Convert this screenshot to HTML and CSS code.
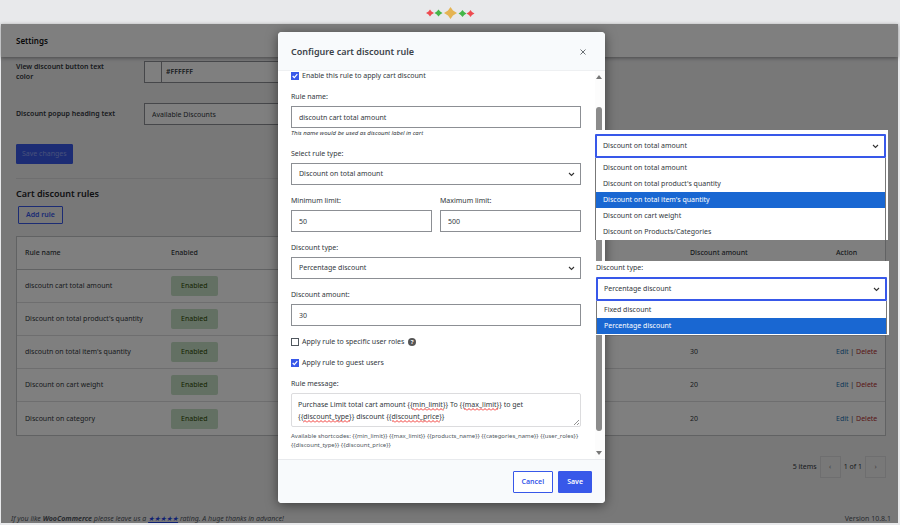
FILE: index.html
```html
<!DOCTYPE html>
<html lang="en">
<head>
  <meta charset="UTF-8">
  <title>Settings</title>
  <link rel="stylesheet" href="styles.css">
</head>
<body>

  <div class="ornament">
    <svg width="50" height="12" viewBox="0 0 50 12">
      <path fill="#ee4b50" d="M5 2.500l1.500 2L9 6 6.500 7.500 5 9.500 3.500 7.500 1 6l2.500-1.500z"/>
      <path fill="#45b649" d="M13.500 2.500l1.700 2L17.500 6l-2.300 1.500-1.700 2-1.700-2L9.500 6l2.300-1.500z"/>
      <path fill="#e5b453" d="M25.500 0l2.500 3.500 4 2.500-4 2.500-2.500 3.500L23 8.500 19 6l4-2.500z"/>
      <path fill="#45b649" d="M37.500 3l1.700 2 2.300 1.500L39.200 8l-1.700 2-1.700-2-2.300-1.500L35.800 5z"/>
      <path fill="#ee4b50" d="M45.500 3L47 5l2.500 1.500L47 8l-1.500 2L44 8l-2.500-1.500L44 5z"/>
    </svg>
  </div>

  <div class="app">
    <header class="topbar"><h1>Settings</h1></header>

    <main class="content">
      <form class="settings">
        <div class="setting">
          <label for="color">View discount button text color</label>
          <div class="color-field">
            <span class="swatch"></span>
            <input type="text" id="color" value="#FFFFFF">
          </div>
        </div>
        <div class="setting">
          <label for="heading">Discount popup heading text</label>
          <input type="text" id="heading" class="field" value="Available Discounts">
        </div>
        <button type="button" class="btn primary save-changes">Save changes</button>
      </form>

      <section class="rules">
        <h2>Cart discount rules</h2>
        <button type="button" class="btn add-rule">Add rule</button>

        <table>
          <thead>
            <tr><th class="name">Rule name</th><th>Enabled</th><th class="amount">Discount amount</th><th class="action">Action</th></tr>
          </thead>
          <tbody>
            <tr><td>discoutn cart total amount</td><td><span class="pill">Enabled</span></td><td></td><td></td></tr>
            <tr><td>Discount on total product's quantity</td><td><span class="pill">Enabled</span></td><td></td><td></td></tr>
            <tr><td>discoutn on total item's quantity</td><td><span class="pill">Enabled</span></td><td>30</td><td class="action"><a href="#">Edit</a> | <a href="#" class="delete">Delete</a></td></tr>
            <tr><td>Discount on cart weight</td><td><span class="pill">Enabled</span></td><td>20</td><td class="action"><a href="#">Edit</a> | <a href="#" class="delete">Delete</a></td></tr>
            <tr><td>Discount on category</td><td><span class="pill">Enabled</span></td><td>20</td><td class="action"><a href="#">Edit</a> | <a href="#" class="delete">Delete</a></td></tr>
          </tbody>
        </table>

        <div class="pagination">
          <span>5 items</span>
          <button type="button" aria-label="Previous page">‹</button>
          <span>1 of 1</span>
          <button type="button" aria-label="Next page">›</button>
        </div>
      </section>
    </main>

    <footer class="page-footer">
      <span class="thanks">If you like <b>WooCommerce</b> please leave us a <a href="#">★★★★★</a> rating. A huge thanks in advance!</span>
      <span>Version 10.8.1</span>
    </footer>

    <div class="overlay">
      <div class="modal" role="dialog" aria-labelledby="modal-title">
        <div class="modal-header">
          <h2 id="modal-title">Configure cart discount rule</h2>
          <button type="button" class="close" aria-label="Close">
            <svg width="6" height="6" viewBox="0 0 6 6"><path d="M.5.500l5 5M5.500.500l-5 5" stroke="#6b7075"/></svg>
          </button>
        </div>

        <div class="modal-body">
          <form class="rule-form">
            <label class="check"><input type="checkbox" checked> Enable this rule to apply cart discount</label>

            <div class="group">
              <label for="rule-name">Rule name:</label>
              <input type="text" id="rule-name" class="field" value="discoutn cart total amount">
              <p class="hint">This name would be used as discount label in cart</p>
            </div>

            <div class="group">
              <label for="rule-type">Select rule type:</label>
              <select id="rule-type" class="field"><option>Discount on total amount</option></select>
            </div>

            <div class="pair">
              <div class="group">
                <label for="min">Minimum limit:</label>
                <input type="text" id="min" class="field" value="50">
              </div>
              <div class="group">
                <label for="max">Maximum limit:</label>
                <input type="text" id="max" class="field" value="500">
              </div>
            </div>

            <div class="group">
              <label for="discount-type">Discount type:</label>
              <select id="discount-type" class="field"><option>Percentage discount</option></select>
            </div>

            <div class="group">
              <label for="amount">Discount amount:</label>
              <input type="text" id="amount" class="field" value="30">
            </div>

            <div class="check-row">
              <label class="check"><input type="checkbox"> Apply rule to specific user roles</label>
              <span class="help">?</span>
            </div>
            <label class="check"><input type="checkbox" checked> Apply rule to guest users</label>

            <div class="group">
              <label for="message">Rule message:</label>
              <div class="message">
                <textarea id="message" spellcheck="false">Purchase Limit total cart amount {{min_limit}} To {{max_limit}} to get {{discount_type}} discount {{discount_price}}</textarea>
                <!-- misspelling marks and resize grip -->
                <svg class="marks" width="290" height="34">
                  <defs>
                    <pattern id="wave" width="4" height="3" patternUnits="userSpaceOnUse">
                      <path d="M0 2.500L2 .500l2 2" fill="none" stroke="#f0332f"/>
                    </pattern>
                  </defs>
                  <rect x="121" y="15" width="32" height="3" fill="url(#wave)"/>
                  <rect x="173" y="15" width="34" height="3" fill="url(#wave)"/>
                  <rect x="12" y="27" width="47" height="3" fill="url(#wave)"/>
                  <rect x="101" y="27" width="48" height="3" fill="url(#wave)"/>
                  <path d="M283 32l5-5M286 32l2-2" stroke="#777" stroke-width=".8"/>
                </svg>
              </div>
              <p class="shortcodes">Available shortcodes: {{min_limit}} {{max_limit}} {{products_name}} {{categories_name}} {{user_roles}} {{discount_type}} {{discount_price}}</p>
            </div>
          </form>

          <div class="scrollbar">
            <span class="arrow up"></span>
            <span class="thumb"></span>
            <span class="arrow down"></span>
          </div>
        </div>

        <div class="modal-footer">
          <button type="button" class="btn">Cancel</button>
          <button type="button" class="btn primary">Save</button>
        </div>
      </div>
    </div>

    <div class="popup rule-popup">
      <select class="field open" aria-label="Rule type"><option>Discount on total amount</option></select>
      <ul class="options">
        <li>Discount on total amount</li>
        <li>Discount on total product's quantity</li>
        <li class="active">Discount on total item's quantity</li>
        <li>Discount on cart weight</li>
        <li>Discount on Products/Categories</li>
      </ul>
    </div>

    <div class="popup type-popup">
      <label for="type-open">Discount type:</label>
      <select id="type-open" class="field open"><option>Percentage discount</option></select>
      <ul class="options">
        <li>Fixed discount</li>
        <li class="active">Percentage discount</li>
      </ul>
    </div>
  </div>

</body>
</html>
```
FILE: styles.css
```css
* {
  box-sizing: border-box;
}
body {
  margin: 0;
  min-height: 100vh;
  padding: 0 2px 2px 1px;
  display: flex;
  flex-direction: column;
  background: #e8e9eb;
  color: #32373c;
  font-family: "Noto Sans", "Open Sans", sans-serif;
  font-size: 7px;
  line-height: 10px;
}
h1, h2, p, ul {
  margin: 0;
  padding: 0;
}
input, select, textarea, button {
  font: inherit;
  color: inherit;
}
.ornament {
  height: 24px;
  padding-top: 7px;
  display: flex;
  justify-content: center;
}
.app {
  position: relative;
  flex: 1;
  display: flex;
  flex-direction: column;
  background: #f0f0f1;
}

/* settings page */
.topbar {
  height: 33px;
  padding: 0 15px;
  display: flex;
  align-items: center;
  background: #fff;
  box-shadow: 0 1px 4px rgba(0, 0, 0, 0.4);
}
.topbar h1 {
  font-size: 8px;
  font-weight: 600;
  color: #111;
}
.content {
  flex: 1;
  padding: 4px 12px 0 15px;
}
.setting {
  display: grid;
  grid-template-columns: 104px 400px;
  column-gap: 24px;
  align-items: center;
  margin-bottom: 20px;
  font-weight: 600;
}
.field {
  width: 100%;
  height: 22px;
  padding: 0 7px;
  border: 1px solid #8c8f94;
  border-radius: 0;
  background: #fff;
  font-weight: 400;
}
.color-field {
  display: flex;
  height: 22px;
  border: 1px solid #8c8f94;
  background: #fff;
}
.swatch {
  width: 17px;
  border-right: 1px solid #8c8f94;
}
.color-field input {
  border: 0;
  padding: 0 4px;
  background: none;
}
.btn {
  height: 22px;
  padding: 0 8px;
  border: 1px solid #3858e9;
  border-radius: 1px;
  background: #fff;
  color: #3858e9;
  font-size: 7px;
  font-weight: 600;
}
.btn.primary {
  background: #3858e9;
  color: #fff;
}
.btn.save-changes {
  display: block;
  height: 20px;
  padding: 0 5px;
  margin-top: -1px;
  color: #8fa2f5;
  font-weight: 400;
}
.settings {
  padding-bottom: 14px;
  border-bottom: 1px solid #dcdcde;
}
.rules h2 {
  padding: 9px 0 6px;
  font-size: 9px;
  line-height: 12px;
  font-weight: 600;
  color: #1d2327;
}
.add-rule {
  display: block;
  height: 18px;
  padding: 0 7px;
  margin: 0 0 12px 2px;
  background: none;
}
table {
  width: 100%;
  border: 1px solid #c3c4c7;
  border-collapse: separate;
  border-spacing: 0;
  background: #fff;
  table-layout: fixed;
}
th, td {
  height: 33px;
  padding: 0 8px;
  text-align: left;
  border-bottom: 1px solid #dcdcde;
}
th {
  font-weight: 500;
  border-bottom-color: #c3c4c7;
}
tr:last-child td {
  border-bottom: 0;
}
.name, .amount {
  width: 146px;
}
.action {
  width: 57px;
  padding-right: 0;
  white-space: nowrap;
}
.pill {
  display: inline-block;
  padding: 5px 10px;
  border-radius: 2px;
  background: #c6e1c6;
  color: #2c4700;
}
td a {
  color: #2271b1;
  text-decoration: none;
}
td .delete {
  color: #b32d2e;
}
.pagination {
  margin-top: 20px;
  display: flex;
  align-items: center;
  justify-content: flex-end;
  gap: 3px;
}
.pagination button {
  width: 21px;
  height: 22px;
  padding: 0;
  border: 1px solid #dcdcde;
  background: none;
  color: #888;
}
.page-footer {
  display: flex;
  justify-content: space-between;
  padding: 0 7px 0 10px;
  line-height: 8px;
  color: #50575e;
}
.thanks {
  font-style: italic;
}
.thanks a {
  color: #2145e6;
}

/* modal */
.overlay {
  position: absolute;
  inset: 0;
  padding: 8px 16px 0 0;
  display: flex;
  justify-content: center;
  align-items: flex-start;
  background: rgba(0, 0, 0, 0.5);
}
.modal {
  width: 327px;
  border-radius: 4px;
  background: #fff;
  box-shadow: 0 2px 12px rgba(0, 0, 0, 0.5);
  overflow: hidden;
}
.modal-header {
  height: 39px;
  padding: 1px 16px 0 13px;
  display: flex;
  align-items: center;
  justify-content: space-between;
  background: #f8fafc;
  border-bottom: 1px solid #eef0f2;
}
.modal-header h2 {
  font-size: 9px;
  font-weight: 600;
  color: #3c434a;
}
.close {
  display: flex;
  padding: 3px;
  border: 0;
  background: none;
}
.modal-body {
  height: 388px;
  display: flex;
  overflow: hidden;
}
.rule-form {
  flex: 1;
  padding: 0 14px 0 13px;
  display: flex;
  flex-direction: column;
  gap: 11px;
}
.group label {
  display: block;
  margin-bottom: 4px;
}
.pair {
  display: grid;
  grid-template-columns: 1fr 1fr;
  gap: 8px;
}
.hint {
  font-size: 6px;
  font-style: italic;
}
.check-row {
  display: flex;
  align-items: center;
  gap: 4px;
}
.check {
  display: flex;
  align-items: center;
  gap: 3px;
}
.check input {
  appearance: none;
  width: 8px;
  height: 8px;
  margin: 0;
  border: 1px solid #50575e;
  background: #fff;
}
.check input:checked {
  border-color: #3858e9;
  background: #3858e9 url("data:image/svg+xml,%3Csvg xmlns='http://www.w3.org/2000/svg' viewBox='0 0 6 6'%3E%3Cpath d='M.7 3l1.600 1.700L5.300 1.200' fill='none' stroke='white' stroke-width='1.200'/%3E%3C/svg%3E");
}
.help {
  width: 8px;
  height: 8px;
  border-radius: 50%;
  background: #555;
  color: #fff;
  font-size: 6px;
  line-height: 8px;
  font-weight: 700;
  text-align: center;
}
select.field {
  appearance: none;
  background: #fff url("data:image/svg+xml,%3Csvg xmlns='http://www.w3.org/2000/svg' width='7' height='5' viewBox='0 0 7 5'%3E%3Cpath d='M1 1l2.500 2.500L6 1' fill='none' stroke='%23333' stroke-width='1.100'/%3E%3C/svg%3E") no-repeat right 5px center;
}
.message {
  position: relative;
}
.message textarea {
  display: block;
  width: 100%;
  height: 34px;
  padding: 5px 6px;
  border: 1px solid #dcdcde;
  border-radius: 2px;
  line-height: 12px;
  resize: none;
  overflow: hidden;
}
.marks {
  position: absolute;
  left: 0;
  top: 0;
  pointer-events: none;
}
.shortcodes {
  margin-top: 5px;
  font-size: 6px;
  line-height: 9px;
  color: #50575e;
}
.scrollbar {
  width: 10px;
  padding: 4px 2px 4px 0;
  display: flex;
  flex-direction: column;
  align-items: center;
  background: #fcfcfc;
}
.arrow {
  border: 3px solid transparent;
}
.arrow.up {
  border-top: 0;
  border-bottom: 4px solid #777;
}
.arrow.down {
  border-bottom: 0;
  border-top: 4px solid #777;
}
.thumb {
  width: 6px;
  flex: 1;
  margin: 28px 0 20px;
  border-radius: 3px;
  background: #8b8b8b;
}
.modal-footer {
  height: 44px;
  padding: 0 13px;
  display: flex;
  align-items: center;
  justify-content: flex-end;
  gap: 5px;
  background: #f8fafc;
  border-top: 1px solid #e8eaed;
}

/* open dropdowns */
.popup {
  position: absolute;
  background: #fff;
}
.rule-popup {
  top: 106px;
  right: 10px;
  width: 294px;
  padding: 4px 2px 0 1px;
}
.type-popup {
  top: 237px;
  right: 9px;
  width: 294px;
  padding: 2px 2px 1px 1px;
}
.type-popup label {
  display: block;
  margin-bottom: 4px;
}
.field.open {
  display: block;
  height: 24px;
  padding: 0 6px;
  border: 2px solid #3858e9;
  border-radius: 1px;
}
.options {
  list-style: none;
  padding-top: 1px;
  border: 1px solid #777;
  border-top: 0;
  border-bottom: 0;
}
.options li {
  padding: 3px 7px;
}
.rule-popup .options {
  padding-top: 2px;
}
.options .active {
  background: #1967d2;
  color: #fff;
}
```
